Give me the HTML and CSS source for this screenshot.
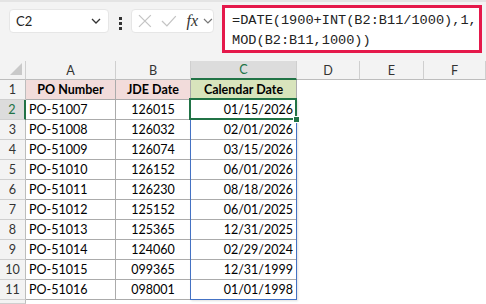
FILE: index.html
```html
<!DOCTYPE html>
<html lang="en">
<head>
  <meta charset="UTF-8" />
  <title>JDE Date to Calendar Date</title>
  <link rel="stylesheet" href="styles.css">
</head>
<body>
  <div class="toolbar">
    <div class="name-box">
      <span>C2</span>
      <svg class="chev" width="10" height="6" viewBox="0 0 10 6"><path d="M1 1 L5 5 L9 1" fill="none" stroke="#333" stroke-width="1.3"/></svg>
    </div>
    <div class="dots"><i></i><i></i><i></i></div>
    <div class="fx-box">
      <svg class="ic-x" width="14" height="14" viewBox="0 0 14 14"><path d="M1 1 L13 13 M13 1 L1 13" stroke="#c4c4c4" stroke-width="1.3"/></svg>
      <svg class="ic-ok" width="16" height="14" viewBox="0 0 16 14"><path d="M1 7 L6 12 L15 2" fill="none" stroke="#c4c4c4" stroke-width="1.3"/></svg>
      <span class="fx">fx</span>
      <svg class="ic-dd" width="10" height="6" viewBox="0 0 10 6"><path d="M1 1 L5 5 L9 1" fill="none" stroke="#777" stroke-width="1.2"/></svg>
    </div>
    <div class="formula">=DATE(1900+INT(B2:B11/1000),1,<br>MOD(B2:B11,1000))</div>
  </div>

  <div class="sheet">
    <div class="hd corner"><svg width="14" height="14" viewBox="0 0 14 14"><path d="M13 1 L13 13 L1 13 Z" fill="#c9c9c9"/></svg></div>
    <div class="hd">A</div>
    <div class="hd">B</div>
    <div class="hd col-sel">C</div>
    <div class="hd">D</div>
    <div class="hd">E</div>
    <div class="hd">F</div>

    <div class="rn">1</div>
    <div class="c t pink bold center">PO Number</div>
    <div class="c t pink bold center">JDE Date</div>
    <div class="c t green bold center">Calendar Date</div>
    <div class="c"></div><div class="c"></div><div class="c"></div>

    <div class="rn row-sel">2</div>
    <div class="c t">PO-51007</div><div class="c t center">126015</div>
    <div class="c t right anchor">01/15/2026<span class="spill"></span><span class="active"><span class="handle"></span></span></div>
    <div class="c"></div><div class="c"></div><div class="c"></div>

    <div class="rn">3</div>
    <div class="c t">PO-51008</div><div class="c t center">126032</div><div class="c t right">02/01/2026</div>
    <div class="c"></div><div class="c"></div><div class="c"></div>

    <div class="rn">4</div>
    <div class="c t">PO-51009</div><div class="c t center">126074</div><div class="c t right">03/15/2026</div>
    <div class="c"></div><div class="c"></div><div class="c"></div>

    <div class="rn">5</div>
    <div class="c t">PO-51010</div><div class="c t center">126152</div><div class="c t right">06/01/2026</div>
    <div class="c"></div><div class="c"></div><div class="c"></div>

    <div class="rn">6</div>
    <div class="c t">PO-51011</div><div class="c t center">126230</div><div class="c t right">08/18/2026</div>
    <div class="c"></div><div class="c"></div><div class="c"></div>

    <div class="rn">7</div>
    <div class="c t">PO-51012</div><div class="c t center">125152</div><div class="c t right">06/01/2025</div>
    <div class="c"></div><div class="c"></div><div class="c"></div>

    <div class="rn">8</div>
    <div class="c t">PO-51013</div><div class="c t center">125365</div><div class="c t right">12/31/2025</div>
    <div class="c"></div><div class="c"></div><div class="c"></div>

    <div class="rn">9</div>
    <div class="c t">PO-51014</div><div class="c t center">124060</div><div class="c t right">02/29/2024</div>
    <div class="c"></div><div class="c"></div><div class="c"></div>

    <div class="rn">10</div>
    <div class="c t">PO-51015</div><div class="c t center">099365</div><div class="c t right">12/31/1999</div>
    <div class="c"></div><div class="c"></div><div class="c"></div>

    <div class="rn">11</div>
    <div class="c t">PO-51016</div><div class="c t center">098001</div><div class="c t right">01/01/1998</div>
    <div class="c"></div><div class="c"></div><div class="c"></div>

    <div class="rn"></div>
    <div class="c"></div><div class="c"></div><div class="c"></div>
    <div class="c"></div><div class="c"></div><div class="c"></div>
  </div>
</body>
</html>
```

FILE: styles.css
```css
* {
  margin: 0;
  padding: 0;
  box-sizing: border-box;
}

body {
  width: 486px;
  height: 304px;
  overflow: hidden;
  background: white;
  font-family: Lato, 'Liberation Sans', sans-serif;
  font-size: 12.5px;
  color: #000;
}

/* formula bar */
.toolbar {
  display: flex;
  align-items: flex-start;
  height: 61px;
  padding-left: 9px;
  background: #f3f3f3;
  border-top: 2px solid #e4e4e4;
}

.name-box {
  width: 100px;
  height: 24px;
  margin-top: 7px;
  padding: 0 7px 0 6px;
  display: flex;
  align-items: center;
  justify-content: space-between;
  background: white;
  border: 1px solid #e6e6e6;
  border-radius: 4px;
  font-size: 13px;
  color: #222;
}

.dots {
  width: 22px;
  margin-top: 15px;
  display: flex;
  flex-direction: column;
  align-items: center;
  gap: 2px;
}

.dots i {
  width: 3px;
  height: 3px;
  background: #333;
}

.fx-box {
  width: 83px;
  height: 24px;
  margin-top: 7px;
  padding-left: 6px;
  display: flex;
  align-items: center;
  background: white;
  border: 1px solid #e6e6e6;
  border-radius: 4px;
}

.ic-ok { margin-left: 9px; }
.ic-dd { margin-left: 5px; }

.fx {
  font-family: 'Liberation Serif', serif;
  font-style: italic;
  font-size: 16px;
  color: #333;
  margin-left: 10px;
}

.formula {
  width: 260px;
  height: 48px;
  margin: 3px 0 0 8px;
  padding: 3px 0 0 7px;
  background: white;
  border: 3px solid #e5194b;
  font-family: 'Liberation Mono', monospace;
  font-size: 13.6px;
  line-height: 20px;
  color: #222;
}

/* grid */
.sheet {
  display: grid;
  grid-template-columns: 26px 90px 75px 106px 63px 64px 1fr;
  grid-template-rows: 19px repeat(11, 20px) 4px;
}

.hd {
  background: #f3f3f3;
  border-right: 1px solid #cfcfcf;
  border-bottom: 1px solid #bdbdbd;
  color: #333;
  display: flex;
  align-items: center;
  justify-content: center;
  font-size: 12.6px;
}

.corner {
  justify-content: flex-end;
  align-items: flex-end;
  padding: 0 2px 3px 0;
}

.col-sel {
  background: #dcdcdc;
  color: #217346;
  border-bottom: 2px solid #217346;
}

.rn {
  background: #f3f3f3;
  border-right: 1px solid #bdbdbd;
  border-bottom: 1px solid #cfcfcf;
  color: #333;
  display: flex;
  align-items: center;
  justify-content: center;
  font-size: 12.6px;
}

.row-sel {
  background: #dcdcdc;
  color: #217346;
  border-right: 2px solid #217346;
}

.c {
  background: white;
}

.t {
  border-right: 1px solid #ababab;
  border-bottom: 1px solid #ababab;
  display: flex;
  align-items: center;
  padding: 0 3px;
  white-space: nowrap;
}

.center { justify-content: center; }
.right { justify-content: flex-end; }
.bold { font-weight: bold; }
.pink { background: #f2dcdb; }
.green { background: #d8e4bc; }

/* selection overlays on C2 */
.anchor {
  position: relative;
}

.spill {
  position: absolute;
  top: -1px;
  left: -1px;
  width: 107px;
  height: 201px;
  border: 1px solid #4472c4;
  box-shadow: 1px 1px 2px rgba(0, 0, 0, 0.12);
  pointer-events: none;
}

.active {
  position: absolute;
  top: -2px;
  left: -2px;
  width: 108px;
  height: 22px;
  border: 2px solid #217346;
}

.handle {
  position: absolute;
  right: -5px;
  bottom: -5px;
  width: 7px;
  height: 7px;
  background: #217346;
  border: 1px solid white;
}
```
